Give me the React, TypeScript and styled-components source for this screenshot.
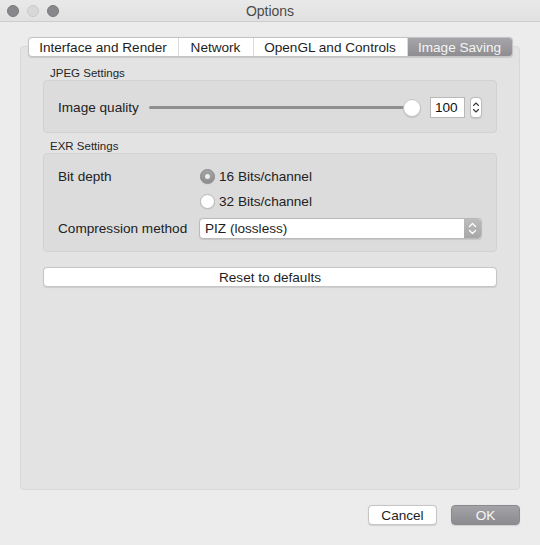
import React from 'react';
import styled, { createGlobalStyle } from 'styled-components';

const Global = createGlobalStyle`
  html, body { margin: 0; padding: 0; background: #ececec; }
  body {
    font-family: "Liberation Sans", Arial, sans-serif;
    font-size: 13.6px;
    color: #222;
  }
  * { box-sizing: border-box; }
`;

const Window = styled.div`
  width: 540px;
  height: 545px;
  display: flex;
  flex-direction: column;
  background: #ececec;
  overflow: hidden;
`;

const TitleBar = styled.div`
  flex: none;
  height: 22px;
  display: grid;
  grid-template-columns: 1fr auto 1fr;
  align-items: center;
  background: linear-gradient(#e9e9e9, #e1e1e1);
  border-bottom: 1px solid #cdcdcd;
`;

const Lights = styled.div`
  display: flex;
  gap: 8px;
  padding-left: 7px;
`;

const Light = styled.span<{ $dim?: boolean }>`
  width: 12px;
  height: 12px;
  border-radius: 50%;
  background: ${(p) => (p.$dim ? '#d8d8d8' : '#88888c')};
  border: 1px solid ${(p) => (p.$dim ? '#cacaca' : '#7a7a7e')};
`;

const Title = styled.div`
  font-size: 14px;
  color: #4b4b4b;
`;

const Body = styled.div`
  flex: none;
  padding: 15px 20px 0;
  display: flex;
  flex-direction: column;
`;

const TabBar = styled.div`
  position: relative;
  z-index: 1;
  align-self: center;
  display: flex;
  height: 20px;
  background: #fff;
  border: 1px solid #c4c4c4;
  border-radius: 4px;
  box-shadow: 0 0.5px 1px rgba(0, 0, 0, 0.12);
  overflow: hidden;
`;

const Tab = styled.div<{ $w: number; $active?: boolean }>`
  width: ${(p) => p.$w}px;
  display: flex;
  align-items: center;
  justify-content: center;
  font-size: 13.6px;
  color: ${(p) => (p.$active ? '#f4f4f4' : '#1e1e1e')};
  background: ${(p) => (p.$active ? 'linear-gradient(#a6a6aa, #8e8e92)' : 'transparent')};
  & + & { border-left: 1px solid #dadada; }
`;

const Pane = styled.div`
  height: 444px;
  margin-top: -11px;
  padding: 19px 22px 0;
  background: #e3e3e3;
  border: 1px solid #d8d8d8;
  border-radius: 4px;
  display: flex;
  flex-direction: column;
`;

const SectionTitle = styled.div`
  font-size: 11.5px;
  line-height: 14px;
  padding-left: 7px;
  color: #262626;
`;

const Group = styled.div`
  background: #dcdcdc;
  border: 1px solid #d2d2d2;
  border-radius: 4px;
`;

const JpegGroup = styled(Group)`
  padding: 16px 14px 14px;
  margin-bottom: 6px;
  display: flex;
  align-items: center;
  height: 53px;
`;

const FieldLabel = styled.span<{ $w?: number; $bottom?: boolean }>`
  font-size: 13.6px;
  color: #222;
  ${(p) => (p.$w ? `width: ${p.$w}px; flex: none;` : '')}
  ${(p) => (p.$bottom ? 'align-self: end; line-height: 21px;' : '')}
`;

const Slider = styled.div`
  flex: 1;
  display: flex;
  align-items: center;
  height: 21px;
`;

const Track = styled.div`
  flex: 1;
  height: 3px;
  border-radius: 2px;
  background: #8f8f8f;
`;

const Thumb = styled.div`
  flex: none;
  width: 18px;
  height: 18px;
  margin-left: -9px;
  border-radius: 50%;
  background: #fff;
  border: 1px solid #c2c2c2;
  box-shadow: 0 1px 1px rgba(0, 0, 0, 0.12);
`;

const SpinBox = styled.div`
  flex: none;
  width: 35px;
  height: 21px;
  margin-left: 9px;
  padding-left: 4px;
  display: flex;
  align-items: center;
  background: #fff;
  border: 1px solid #b8b8b8;
  font-size: 13.6px;
  color: #111;
`;

const Stepper = styled.div`
  flex: none;
  width: 12px;
  height: 21px;
  margin-left: 5px;
  background: #fff;
  border: 1px solid #bdbdbd;
  border-radius: 4px;
  display: flex;
  align-items: center;
  justify-content: center;
  box-shadow: 0 0.5px 1px rgba(0, 0, 0, 0.1);
`;

const ExrGroup = styled(Group)`
  height: 99px;
  padding: 12px 14px;
  display: grid;
  grid-template-columns: 141px 1fr;
  grid-template-rows: 21px 21px 23px;
  row-gap: 4px;
  align-items: center;
`;

const RadioRow = styled.label`
  display: flex;
  align-items: center;
  gap: 4px;
  padding-left: 1px;
  font-size: 13.6px;
  color: #222;
`;

const RadioDot = styled.span<{ $on?: boolean }>`
  width: 15px;
  height: 15px;
  border-radius: 50%;
  display: flex;
  align-items: center;
  justify-content: center;
  background: ${(p) => (p.$on ? 'linear-gradient(#a3a3a3, #8f8f8f)' : '#fff')};
  border: 1px solid ${(p) => (p.$on ? '#878787' : '#b8b8b8')};
  box-shadow: 0 0.5px 1px rgba(0, 0, 0, 0.1);
  &::after {
    content: '';
    display: ${(p) => (p.$on ? 'block' : 'none')};
    width: 5px;
    height: 5px;
    border-radius: 50%;
    background: #ececec;
  }
`;

const Combo = styled.div`
  align-self: end;
  height: 21px;
  display: flex;
  background: #fff;
  border: 1px solid #bababa;
  border-radius: 4px;
  overflow: hidden;
  box-shadow: 0 0.5px 1px rgba(0, 0, 0, 0.1);
`;

const ComboText = styled.span`
  flex: 1;
  display: flex;
  align-items: center;
  padding-left: 5px;
  font-size: 13.6px;
  color: #1e1e1e;
`;

const ComboArrow = styled.span`
  flex: none;
  width: 17px;
  display: flex;
  align-items: center;
  justify-content: center;
  background: linear-gradient(#bcbcbc, #a7a7a7);
`;

const WideButton = styled.div`
  margin-top: 15px;
  height: 20px;
  display: flex;
  align-items: center;
  justify-content: center;
  background: #fff;
  border: 1px solid #c6c6c6;
  border-radius: 4px;
  box-shadow: 0 0.5px 1px rgba(0, 0, 0, 0.1);
  font-size: 13.6px;
  color: #1e1e1e;
`;

const Footer = styled.div`
  display: flex;
  justify-content: flex-end;
  gap: 14px;
  padding: 15px 20px 0;
`;

const DialogButton = styled.div<{ $primary?: boolean }>`
  width: 69px;
  height: 20px;
  display: flex;
  align-items: center;
  justify-content: center;
  border-radius: 4px;
  font-size: 13.6px;
  color: ${(p) => (p.$primary ? '#f6f6f6' : '#1e1e1e')};
  background: ${(p) => (p.$primary ? 'linear-gradient(#a3a3a7, #8c8c90)' : '#fff')};
  border: 1px solid ${(p) => (p.$primary ? '#8a8a8e' : '#c6c6c6')};
  box-shadow: 0 0.5px 1px rgba(0, 0, 0, 0.12);
`;

const StepperIcon = () => (
  <svg width="10" height="19" viewBox="0 0 10 19" fill="none" stroke="#3a3a3a" strokeWidth="1.1" strokeLinecap="round" strokeLinejoin="round">
    <path d="M2.5 7.5 L5 5 L7.5 7.5" />
    <path d="M2.5 11.5 L5 14 L7.5 11.5" />
  </svg>
);

const ComboIcon = () => (
  <svg width="17" height="19" viewBox="0 0 17 19" fill="none" stroke="#ffffff" strokeWidth="1.3" strokeLinecap="round" strokeLinejoin="round">
    <path d="M5.5 7.5 L8.5 4.5 L11.5 7.5" />
    <path d="M5.5 11.5 L8.5 14.5 L11.5 11.5" />
  </svg>
);

export default function App() {
  return (
    <>
      <Global />
      <Window>
        <TitleBar>
          <Lights>
            <Light />
            <Light $dim />
            <Light />
          </Lights>
          <Title>Options</Title>
          <span />
        </TitleBar>
        <Body>
          <TabBar>
            <Tab $w={149}>Interface and Render</Tab>
            <Tab $w={75}>Network</Tab>
            <Tab $w={154}>OpenGL and Controls</Tab>
            <Tab $w={105} $active>Image Saving</Tab>
          </TabBar>
          <Pane>
            <SectionTitle>JPEG Settings</SectionTitle>
            <JpegGroup>
              <FieldLabel $w={91}>Image quality</FieldLabel>
              <Slider>
                <Track />
                <Thumb />
              </Slider>
              <SpinBox>100</SpinBox>
              <Stepper>
                <StepperIcon />
              </Stepper>
            </JpegGroup>
            <SectionTitle>EXR Settings</SectionTitle>
            <ExrGroup>
              <FieldLabel>Bit depth</FieldLabel>
              <RadioRow>
                <RadioDot $on />
                16 Bits/channel
              </RadioRow>
              <span />
              <RadioRow>
                <RadioDot />
                32 Bits/channel
              </RadioRow>
              <FieldLabel $bottom>Compression method</FieldLabel>
              <Combo>
                <ComboText>PIZ (lossless)</ComboText>
                <ComboArrow>
                  <ComboIcon />
                </ComboArrow>
              </Combo>
            </ExrGroup>
            <WideButton>Reset to defaults</WideButton>
          </Pane>
        </Body>
        <Footer>
          <DialogButton>Cancel</DialogButton>
          <DialogButton $primary>OK</DialogButton>
        </Footer>
      </Window>
    </>
  );
}
